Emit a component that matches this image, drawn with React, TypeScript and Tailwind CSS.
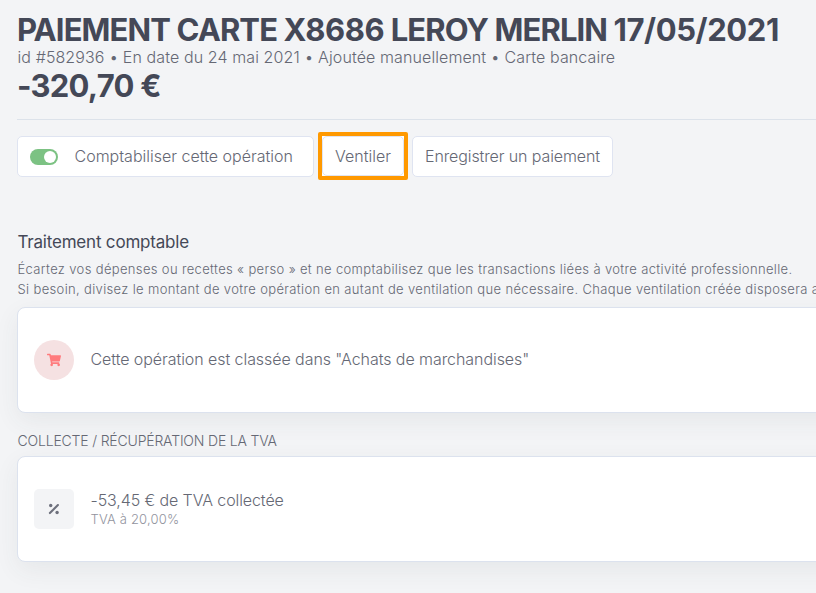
import type { ReactNode } from "react";
import { FaShoppingCart } from "react-icons/fa";

const meta = ["id #582936", "En date du 24 mai 2021", "Ajoutée manuellement", "Carte bancaire"];

function PercentIcon() {
  return (
    <svg viewBox="0 0 12 12" className="size-3" fill="currentColor">
      <circle cx="2.7" cy="2.5" r="1.7" />
      <circle cx="9.1" cy="9.5" r="1.7" />
      <path d="M1.9 10.1 9.9 2.1" stroke="currentColor" strokeWidth="2.1" strokeLinecap="round" />
    </svg>
  );
}

function ActionButton({ children, className = "" }: { children: ReactNode; className?: string }) {
  return (
    <button
      type="button"
      className={`flex shrink-0 items-center rounded-[5px] border border-[#dfe4f1] bg-white px-3 whitespace-nowrap ${className}`}
    >
      {children}
    </button>
  );
}

function Card({ icon, children }: { icon: ReactNode; children: ReactNode }) {
  return (
    <div className="flex h-[106px] w-[840px] items-center rounded-lg border border-[#dce2ee] bg-white px-4 shadow-[0_8px_24px_rgba(60,64,75,0.07)]">
      {icon}
      <div className="ml-[16.5px]">{children}</div>
    </div>
  );
}

export default function App() {
  return (
    <main className="h-[593px] w-[816px] overflow-hidden bg-[#f3f4f6] pl-[17px] font-['Inter',sans-serif] text-base font-light text-[#656874]">
      <header className="flex h-[120px] flex-col border-b border-[#dce2ea] pt-[10px] whitespace-nowrap">
        <h1 className="h-[37px] text-[31px] leading-[40px] font-bold tracking-[-0.9px] text-[#444857]">
          PAIEMENT CARTE <span className="tracking-[-0.42px]">X8686</span> LEROY MERLIN{" "}
          <span className="tracking-[-0.42px]">17/05/2021</span>
        </h1>
        <p className="h-[21px] pl-[0.5px] leading-5 tracking-[0.1px]">{meta.join(" • ")}</p>
        <p className="text-[31px] leading-[36px] font-bold tracking-[-0.75px] text-[#444857]">-320,70 €</p>
      </header>

      <div className="mt-4 flex h-[41px]">
        <ActionButton className="h-[41px] w-[297px] pb-px">
          <span className="mt-px flex h-4 w-7 items-center justify-end rounded-full bg-[#7cc283] p-[2px]">
            <span className="size-3 rounded-full bg-white" />
          </span>
          <span className="ml-[16.5px]">Comptabiliser cette opération</span>
        </ActionButton>
        <div className="-mt-1 ml-1 h-[48px] w-[90px] shrink-0 rounded-[2px] border-4 border-[#ff9900] bg-white">
          <ActionButton className="h-[40px] w-[82px] justify-center">Ventiler</ActionButton>
        </div>
        <ActionButton className="ml-1 h-[41px] w-[201px] pb-px tracking-[-0.11px]">Enregistrer un paiement</ActionButton>
      </div>

      <section className="pt-[53px]">
        <h2 className="h-[29px] pl-[0.5px] text-[17px] leading-6 font-normal tracking-[-0.2px] text-[#444857]">Traitement comptable</h2>
        <p className="h-[48px] pl-[0.5px] text-[13px] leading-5 tracking-[0.35px] whitespace-nowrap">
          Écartez vos dépenses ou recettes « perso » et ne comptabilisez que les transactions liées à votre activité professionnelle.
          <br />
          Si besoin, divisez le montant de votre opération en autant de ventilation que nécessaire. Chaque ventilation créée disposera a
        </p>
        <Card
          icon={
            <span className="flex size-10 items-center justify-center rounded-full bg-[#f5e1e2] text-[#ff7b7d]">
              <FaShoppingCart size={14} />
            </span>
          }
        >
          <p className="-mt-0.5 tracking-[-0.065px]">Cette opération est classée dans "Achats de marchandises"</p>
        </Card>
      </section>

      <section className="pt-[18px]">
        <h3 className="h-[25px] pl-[0.5px] text-sm leading-5 tracking-[-0.18px] uppercase">Collecte / récupération de la TVA</h3>
        <Card
          icon={
            <span className="flex size-10 items-center justify-center rounded-[5px] bg-[#f3f4f6] text-[#6d707c]">
              <PercentIcon />
            </span>
          }
        >
          <p className="leading-5 tracking-[-0.1px]">-53,45 € de TVA collectée</p>
          <p className="text-[13px] leading-[18px] tracking-[0.18px] text-[#92949e]">TVA à 20,00%</p>
        </Card>
      </section>
    </main>
  );
}
